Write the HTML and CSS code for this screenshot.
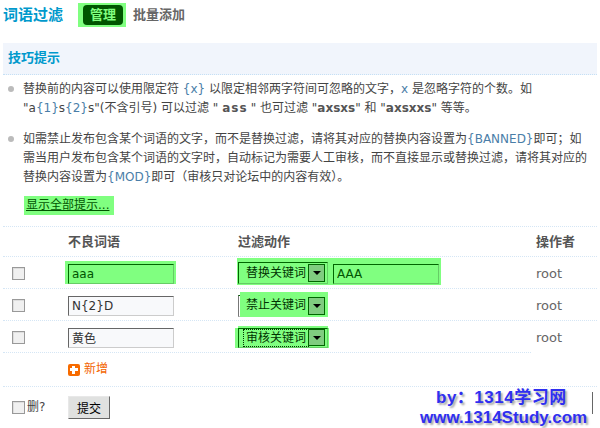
FILE: index.html
```html
<!DOCTYPE html>
<html lang="zh">
<head>
<meta charset="utf-8">
<title>词语过滤</title>
<link rel="stylesheet" href="styles.css">
</head>
<body>
<div class="page">
  <header class="top">
    <h1 class="title">词语过滤</h1>
    <nav class="tabs">
      <span class="glow"><a class="tab-on">管理</a></span>
      <a class="tab">批量添加</a>
    </nav>
  </header>
  <section class="tips">
    <h2 class="tips-head">技巧提示</h2>
    <ul class="tip-list">
      <li>替换前的内容可以使用限定符 <em>{x}</em> 以限定相邻两字符间可忽略的文字，<em>x</em> 是忽略字符的个数。如<br>"a<em>{1}</em>s<em>{2}</em>s"(不含引号) 可以过滤 "<b class="wide">ass</b>" 也可过滤 "<b>axsxs</b>" 和 "<b>axsxxs</b>" 等等。</li>
      <li class="tip-last">如需禁止发布包含某个词语的文字，而不是替换过滤，请将其对应的替换内容设置为<em>{BANNED}</em>即可；如<br>需当用户发布包含某个词语的文字时，自动标记为需要人工审核，而不直接显示或替换过滤，请将其对应的<br>替换内容设置为<em>{MOD}</em>即可（审核只对论坛中的内容有效）。</li>
    </ul>
    <div class="more"><a class="more-link">显示全部提示...</a></div>
  </section>
  <form class="filter">
    <div class="row head">
      <span></span><span>不良词语</span><span>过滤动作</span><span>操作者</span>
    </div>
    <div class="row">
      <span><input class="check" type="checkbox"></span>
      <span><span class="glow-input"><input class="field on" value="aaa"></span></span>
      <span class="action-cell"><span class="glow-action"><span class="select on"><span class="sel-text">替换关键词</span><span class="arrow"></span></span><input class="field on sub" value="AAA"></span></span>
      <span class="op">root</span>
    </div>
    <div class="row">
      <span><input class="check" type="checkbox"></span>
      <span><input class="field" value="N{2}D"></span>
      <span class="action-cell"><span class="select half"><span class="sel-text">禁止关键词</span><span class="arrow"></span></span></span>
      <span class="op">root</span>
    </div>
    <div class="row last">
      <span><input class="check" type="checkbox"></span>
      <span><input class="field" value="黄色"></span>
      <span class="action-cell"><span class="select on focus"><span class="sel-text">审核关键词</span><span class="arrow"></span></span></span>
      <span class="op">root</span>
    </div>
    <div class="add-row"><span class="plus"></span><a class="add">新增</a></div>
    <div class="submit-row">
      <label class="del"><input class="check" type="checkbox">删?</label>
      <button class="submit" type="button">提交</button>
    </div>
  </form>
  <div class="mark">
    <div class="mark-a">by：1314学习网</div>
    <div class="mark-b">www.1314Study.com</div>
  </div>
  <div class="mark-rule"></div>
</div>
</body>
</html>
```

FILE: styles.css
```css
* { box-sizing: border-box; }
html, body { margin: 0; padding: 0; background: #fff; }
body { font: 12px/19px "DejaVu Sans", "Noto Sans CJK SC", sans-serif; color: #444; }
.page { position: relative; width: 600px; height: 428px; overflow: hidden; }
.top { display: flex; align-items: center; height: 28px; padding: 1px 0 0 3px; }
.title { margin: 0; font-size: 15px; font-weight: bold; color: #0099cc; width: 75px; line-height: 28px; }
.tabs { display: flex; align-items: center; font-size: 13px; font-weight: bold; }
.glow { display: block; background: #80ff80; padding: 2px 3px 2px 5px; }
.tab-on { display: block; width: 40px; height: 20px; line-height: 20px; text-align: center; background: #005500; color: #80ff80; border-radius: 4px; }
.tab { margin-left: 7px; color: #666; }
.tips { margin-top: 15px; }
.tips-head { margin: 0 3px; width: 594px; height: 32px; line-height: 30px; padding-left: 5px; background: #f1f5fc; border-bottom: 1px dotted #c5e0f5; font-size: 13px; color: #0099cc; font-weight: bold; }
.tip-list { list-style: none; margin: 0; padding: 5px 0 0 23px; }
.tip-list li { position: relative; margin-bottom: 12px; white-space: nowrap; }
.tip-list li.tip-last { margin-bottom: 9px; }
.tip-list li::before { content: ""; position: absolute; left: -15px; top: 6px; width: 6px; height: 6px; border-radius: 50%; background: #bbb; }
em { font-style: normal; color: #4a7ea8; }
b { color: #555; }
b.wide { margin: 0 3px 0 4px; letter-spacing: 1px; }
.more { margin: 0 0 0 24px; }
.more-link { display: block; width: 90px; height: 19px; padding-left: 2px; background: #80ff80; color: #005500; text-decoration: underline; white-space: nowrap; }
.filter { margin: 11px 3px 0; width: 594px; border-top: 1px dotted #d5e6f5; }
.row { position: relative; display: grid; grid-template-columns: 65px 170px 298px 61px; align-items: center; height: 32px; padding-top: 2px; border-bottom: 1px dotted #d5e6f5; }
.row.head { height: 30px; padding-top: 0; font-size: 13px; font-weight: bold; color: #555; }
.row.last { border-bottom-color: transparent; }
.row.last::after { content: ""; position: absolute; left: 0; bottom: -1px; width: 528px; border-bottom: 1px dotted #d5e6f5; }
.row > span:first-child { padding-left: 9px; display: flex; align-items: center; }
.check { appearance: none; display: block; margin: 0; width: 13px; height: 13px; background: #f0f0f0; border: 1px solid #999; box-shadow: inset 1px 1px 0 #ddd; }
.field { display: block; width: 106px; height: 20px; padding: 0 3px; font: 12px "DejaVu Sans", "Noto Sans CJK SC", sans-serif; color: #333; background: #f8f9fb; border: 1px solid; border-color: #666 #ccc #ccc #666; outline: 0; }
.field.on { background: #80ff80; color: #005500; border-color: #006600 #66cc66 #66cc66 #006600; }
.field.sub { margin-top: 2px; }
.glow-input { position: relative; left: -3px; display: block; width: 111px; height: 23px; margin-top: -2px; padding: 3px 2px 0 3px; background: #80ff80; }
.action-cell { display: flex; align-items: center; }
.glow-action { display: flex; align-items: flex-start; gap: 5px; background: #80ff80; width: 204px; height: 27px; margin: -4px 0 0 -1px; padding: 4px 2px 0 1px; }
.select { position: relative; display: flex; align-items: center; justify-content: space-between; width: 90px; height: 22px; padding: 0 2px 0 7px; color: #003300; border: 1px solid; border-color: #006600 #66cc66 #66cc66 #006600; font-size: 12px; }
.select.on { background: #80ff80; }
.select.half { border-color: #006600 #bbb #bbb #777; }
.select.half::before { content: ""; position: absolute; left: 1px; right: -1px; top: -4px; bottom: -1px; background: #80ff80; }
.select.focus { height: 20px; box-shadow: -3px 0 0 #80ff80, 1px 0 0 #80ff80, 0 -2px 0 #80ff80; }
.select.focus .sel-text { outline: 1px dotted #003300; outline-offset: 0; padding: 0 2px; margin-left: -2px; line-height: 16px; }
.sel-text, .arrow { position: relative; }
.arrow { flex: none; width: 17px; height: 18px; background: #80cc80; border: 1px solid #006600; }
.arrow::after { content: ""; position: absolute; left: 4px; top: 6px; border: 4px solid transparent; border-top-color: #000; border-bottom: 0; }
.focus .arrow { height: 17px; }
.op { font-size: 13px; color: #666; }
.add-row { display: flex; align-items: center; gap: 4px; height: 34px; padding-left: 65px; border-bottom: 1px dotted #d5e6f5; }
.plus { position: relative; display: block; width: 12px; height: 12px; border-radius: 2px; background: #f76b00; }
.plus::before { content: ""; position: absolute; left: 2px; top: 4px; width: 8px; height: 3px; background: #fff; }
.plus::after { content: ""; position: absolute; left: 4px; top: 2px; width: 3px; height: 8px; background: #fff; }
.add { color: #f36400; }
.submit-row { display: grid; grid-template-columns: 65px auto; align-items: center; height: 41px; }
.del { display: flex; align-items: center; gap: 2px; padding-left: 9px; }
.submit { justify-self: start; width: 42px; height: 23px; padding: 0; font: 12px "DejaVu Sans", "Noto Sans CJK SC", sans-serif; color: #000; background: #e0e1e0; border: 1px solid; border-color: #e8e8e8 #666 #666 #e8e8e8; }
.mark { position: absolute; left: 420px; top: 388px; width: 180px; font: bold 17px/20px "Liberation Sans", "Noto Sans CJK SC", sans-serif; color: #2f2ff0; text-shadow: 2px 2px 2px #aaa; white-space: nowrap; }
.mark-a { padding-left: 16px; letter-spacing: .5px; }
.mark-rule { position: absolute; left: 592px; top: 392px; width: 1px; height: 22px; background: #666; }
```
